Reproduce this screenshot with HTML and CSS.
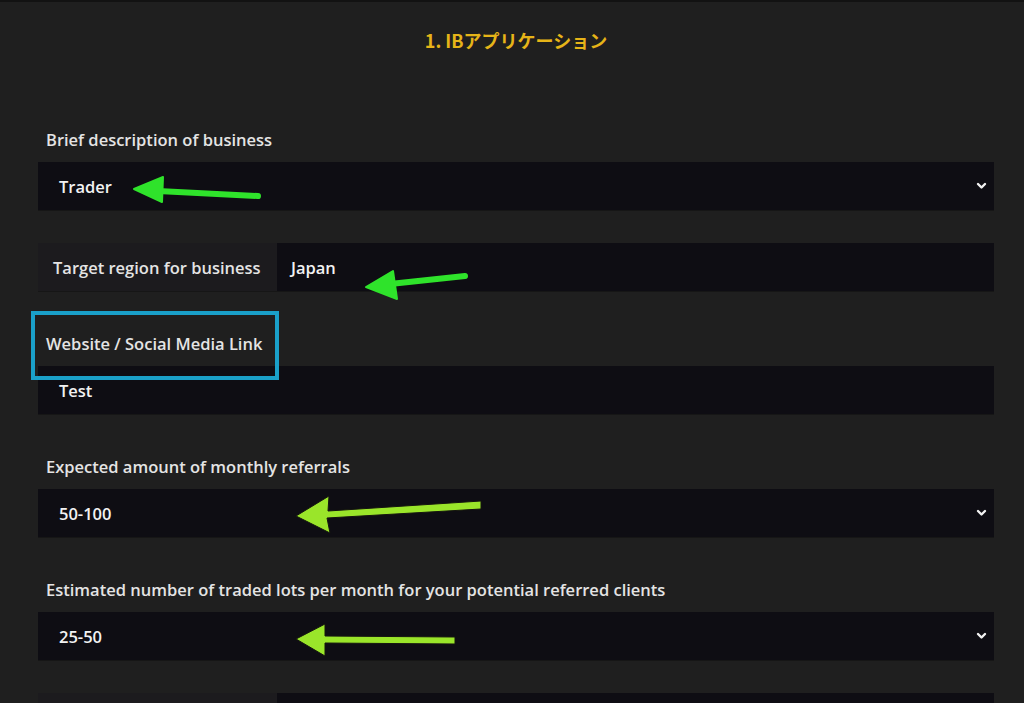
FILE: index.html
```html
<!DOCTYPE html>
<html lang="ja">
<head>
  <meta charset="UTF-8" />
  <meta name="viewport" content="width=device-width, initial-scale=1.0" />
  <title>IBアプリケーション</title>
  <link rel="stylesheet" href="styles.css">
</head>
<body>
  <div class="page">
    <h1 class="step-title">1. IBアプリケーション</h1>

    <form class="ib-form">
      <div class="field">
        <label>Brief description of business</label>
        <div class="select">
          <span class="value">Trader</span>
          <svg class="chevron" width="11" height="8" viewBox="0 0 11 8"><path d="M2 2 L5.5 5.5 L9 2" fill="none" stroke="#f2f2f2" stroke-width="2.4" stroke-linecap="round" stroke-linejoin="round"/></svg>
        </div>
      </div>

      <div class="field">
        <div class="input-group">
          <span class="prefix">Target region for business</span>
          <span class="value">Japan</span>
        </div>
      </div>

      <div class="field">
        <label><span class="marked">Website / Social Media Link</span></label>
        <div class="text-input">
          <span class="value">Test</span>
        </div>
      </div>

      <div class="field">
        <label>Expected amount of monthly referrals</label>
        <div class="select">
          <span class="value">50-100</span>
          <svg class="chevron" width="11" height="8" viewBox="0 0 11 8"><path d="M2 2 L5.5 5.5 L9 2" fill="none" stroke="#f2f2f2" stroke-width="2.4" stroke-linecap="round" stroke-linejoin="round"/></svg>
        </div>
      </div>

      <div class="field">
        <label>Estimated number of traded lots per month for your potential referred clients</label>
        <div class="select">
          <span class="value">25-50</span>
          <svg class="chevron" width="11" height="8" viewBox="0 0 11 8"><path d="M2 2 L5.5 5.5 L9 2" fill="none" stroke="#f2f2f2" stroke-width="2.4" stroke-linecap="round" stroke-linejoin="round"/></svg>
        </div>
      </div>

      <div class="field">
        <div class="input-group">
          <span class="prefix"></span>
          <span class="value"></span>
        </div>
      </div>
    </form>

    <!-- annotation arrows drawn over the screenshot -->
    <svg class="annotations" width="1024" height="703" viewBox="0 0 1024 703">
      <g fill="#2fe32b" stroke="#2fe32b" stroke-linejoin="round">
        <line x1="258" y1="194" x2="158" y2="189" stroke-width="6" stroke-linecap="round"/>
        <polygon points="134,187 163,175 162,200" stroke-width="2"/>
        <line x1="465" y1="274" x2="390" y2="282" stroke-width="6" stroke-linecap="round"/>
        <polygon points="366,285 393,269 397,297" stroke-width="2"/>
      </g>
      <g fill="#9ae52a" stroke="#15150f" stroke-linejoin="round" stroke-width="1">
        <polygon points="481,499 481,507 327,516 330,531 296,514 329,494 328,509"/>
        <polygon points="455,635 455,642 325,641 325,654 296,637 325,622 325,634"/>
      </g>
    </svg>
  </div>
</body>
</html>
```

FILE: styles.css
```css
body {
  margin: 0;
  background: #1f1f1f;
  font-family: "Open Sans", "Noto Sans CJK JP", sans-serif;
  color: #e8e8e8;
}
.page {
  position: relative;
  height: 703px;
  overflow: hidden;
  border-top: 2px solid #121212;
  box-sizing: border-box;
  padding: 0 30px 0 38px;
}
.step-title {
  margin: 0;
  padding-top: 27px;
  text-align: center;
  font-family: "Noto Sans CJK JP", sans-serif;
  font-size: 18px;
  line-height: 22px;
  font-weight: 700;
  color: #e6b418;
}
.ib-form {
  padding-top: 69px;
}
.field {
  margin-bottom: 33px;
}
.field label {
  display: block;
  padding: 9px 0 0 8px;
  margin-bottom: 11px;
  font-size: 16.5px;
  line-height: 22px;
  font-weight: 600;
  color: #e4e4e4;
}
.marked {
  position: relative;
}
.marked::after {
  content: "";
  position: absolute;
  left: -15px;
  right: -17px;
  top: -21px;
  bottom: -25px;
  border: 4px solid #1aa0c9;
}
.select,
.text-input,
.input-group {
  display: flex;
  align-items: center;
  height: 48px;
  background: #0e0d13;
  box-shadow: 0 1px 0 #161616;
}
.select,
.text-input {
  padding: 0 7px 0 21px;
}
.value {
  flex: 1;
  font-size: 16.5px;
  font-weight: 600;
  color: #f2f2f2;
}
.chevron {
  display: block;
}
.prefix {
  display: flex;
  align-items: center;
  align-self: stretch;
  width: 239px;
  box-sizing: border-box;
  padding-left: 15px;
  background: #1c1b1e;
  font-size: 16.5px;
  font-weight: 600;
  color: #e4e4e4;
  white-space: nowrap;
}
.input-group .value {
  padding-left: 14px;
}
.annotations {
  position: absolute;
  left: 0;
  top: 0;
  pointer-events: none;
}
```
